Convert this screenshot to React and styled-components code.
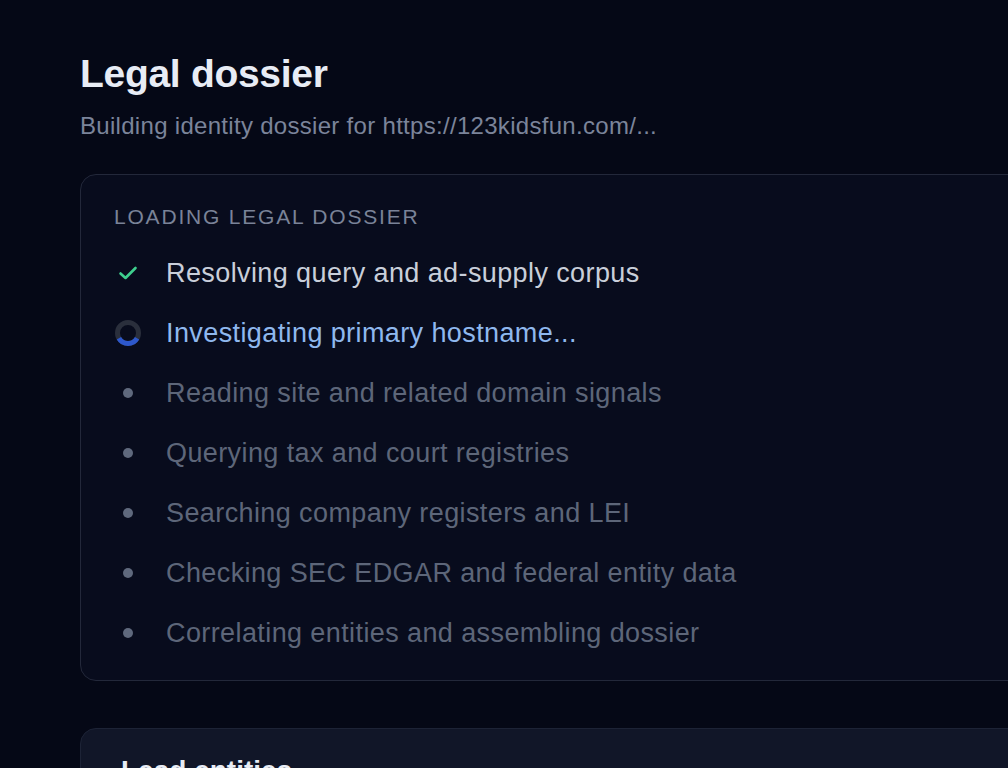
import React from 'react'
import styled, { createGlobalStyle } from 'styled-components'

const GlobalStyle = createGlobalStyle`
  html, body {
    margin: 0;
    padding: 0;
    background: #050816;
    overflow: hidden;
  }
  body {
    font-family: "Liberation Sans", Arial, sans-serif;
    -webkit-font-smoothing: antialiased;
  }
`

const Page = styled.main`
  width: 1100px;
  padding: 52px 0 0 80px;
  box-sizing: border-box;
`

const Title = styled.h1`
  margin: 0;
  font-size: 39px;
  line-height: 44px;
  font-weight: 700;
  color: #e8ecf5;
  letter-spacing: -0.3px;
`

const Subtitle = styled.p`
  margin: 15px 0 0;
  font-size: 24px;
  line-height: 30px;
  letter-spacing: 0.3px;
  color: #7b849a;
`

const Card = styled.section`
  margin-top: 33px;
  background: #080c1d;
  border: 1.5px solid #23283a;
  border-radius: 16px;
  padding: 28px 32px 17px 33px;
`

const Label = styled.div`
  font-size: 21px;
  line-height: 28px;
  letter-spacing: 1.8px;
  text-transform: uppercase;
  color: #7a8398;
  margin-bottom: 12px;
`

const Steps = styled.ul`
  list-style: none;
  margin: 0;
  padding: 0;
`

const colors = {
  done: '#c9cfda',
  active: '#8fb8ee',
  pending: '#5d6679',
}

const Step = styled.li`
  display: flex;
  align-items: center;
  gap: 24px;
  height: 60px;
  font-size: 27px;
  letter-spacing: 0.4px;
  color: ${p => colors[p.$state]};
`

const IconBox = styled.span`
  width: 28px;
  height: 28px;
  display: flex;
  align-items: center;
  justify-content: center;
  flex: none;
`

const Dot = styled.span`
  width: 10px;
  height: 10px;
  border-radius: 50%;
  background: #5f697d;
`

const NextCard = styled.section`
  margin-top: 47px;
  background: #111628;
  border: 1.5px solid #1d2336;
  border-radius: 16px;
  padding: 24px 40px;
  height: 200px;
`

const NextTitle = styled.h2`
  margin: 0;
  font-size: 28px;
  line-height: 36px;
  font-weight: 700;
  color: #e8ecf5;
`

const Check = () => (
  <svg width="20" height="16" viewBox="0 0 20 16" fill="none">
    <path d="M2.5 8.5 L7.5 13 L17.5 3" stroke="#3ecf8e" strokeWidth="2.6" strokeLinecap="round" strokeLinejoin="round" />
  </svg>
)

const Spinner = () => (
  <svg width="28" height="28" viewBox="0 0 28 28">
    <circle cx="14" cy="14" r="10.5" fill="none" stroke="#2a2f3c" strokeWidth="5" />
    <path d="M4.9 19.25 A10.5 10.5 0 0 0 23.1 19.25" fill="none" stroke="#2d58cc" strokeWidth="5" />
  </svg>
)

const steps = [
  { text: 'Resolving query and ad-supply corpus', state: 'done' },
  { text: 'Investigating primary hostname...', state: 'active' },
  { text: 'Reading site and related domain signals', state: 'pending' },
  { text: 'Querying tax and court registries', state: 'pending' },
  { text: 'Searching company registers and LEI', state: 'pending' },
  { text: 'Checking SEC EDGAR and federal entity data', state: 'pending' },
  { text: 'Correlating entities and assembling dossier', state: 'pending' },
]

export default function App() {
  return (
    <>
      <GlobalStyle />
      <Page>
        <Title>Legal dossier</Title>
        <Subtitle>Building identity dossier for https://123kidsfun.com/...</Subtitle>
        <Card>
          <Label>Loading legal dossier</Label>
          <Steps>
            {steps.map(s => (
              <Step key={s.text} $state={s.state}>
                <IconBox>
                  {s.state === 'done' && <Check />}
                  {s.state === 'active' && <Spinner />}
                  {s.state === 'pending' && <Dot />}
                </IconBox>
                {s.text}
              </Step>
            ))}
          </Steps>
        </Card>
        <NextCard>
          <NextTitle>Lead entities</NextTitle>
        </NextCard>
      </Page>
    </>
  )
}
